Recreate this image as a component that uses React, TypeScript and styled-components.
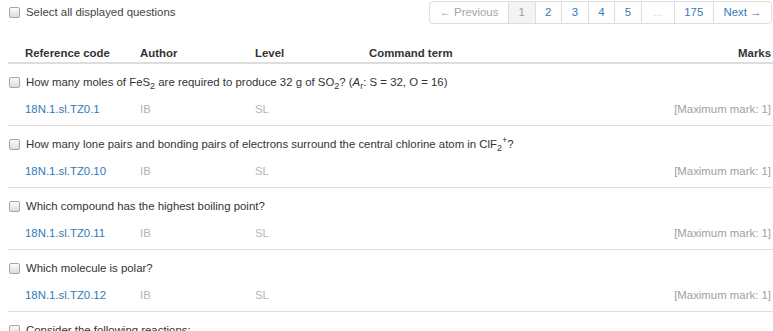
import React from "react";
import styled, { createGlobalStyle } from "styled-components";

const Global = createGlobalStyle`
  html, body { margin: 0; padding: 0; background: #fff; overflow: hidden; }
  body { font-family: "Liberation Sans", Arial, sans-serif; font-size: 11.4px; color: #333; }
`;

const Page = styled.div`
  margin-left: 8px;
  width: 765px;
`;

const TopBar = styled.div`
  display: flex;
  justify-content: space-between;
  align-items: flex-start;
  height: 25px;
`;

const SelectAll = styled.label`
  display: flex;
  align-items: center;
  gap: 6px;
  height: 24px;
  color: #444;
  line-height: 16px;
`;

const Check = styled.input.attrs({ type: "checkbox" })`
  appearance: none;
  -webkit-appearance: none;
  margin: 0 0 0 1px;
  width: 11px;
  height: 11px;
  border: 1px solid #a6a6a6;
  border-radius: 2px;
  background: linear-gradient(#fcfcfc, #dcdcdc);
  box-sizing: border-box;
  flex: none;
`;

const Pager = styled.ul`
  display: flex;
  list-style: none;
  margin: 1px 1px 0 0;
  padding: 0;
`;

const PageItem = styled.li<{ $state?: "link" | "active" | "disabled" | "gap"; $first?: boolean; $last?: boolean }>`
  height: 23px;
  box-sizing: border-box;
  display: flex;
  align-items: center;
  padding: 0 ${(p) => (p.$state === "gap" ? "11px" : "9.6px")};
  border: 1px solid #ddd;
  margin-left: ${(p) => (p.$first ? "0" : "-1px")};
  border-radius: ${(p) => (p.$first ? "4px 0 0 4px" : p.$last ? "0 4px 4px 0" : "0")};
  background: ${(p) => (p.$state === "active" ? "#f3f3f3" : "#fff")};
  color: ${(p) =>
    p.$state === "active" ? "#999" : p.$state === "disabled" ? "#a5a5a5" : p.$state === "gap" ? "#ccc" : "#337ab7"};
  font-size: ${(p) => (p.$state === "gap" ? "10px" : "11.4px")};
  line-height: 15px;
`;

const Grid = styled.div`
  display: grid;
  grid-template-columns: 115px 115px 114px 1fr auto;
  padding: 0 2px 0 17px;
  line-height: 16px;
`;

const Header = styled(Grid)`
  padding-top: 20px;
  padding-bottom: 1px;
  border-bottom: 2px solid #ddd;
  font-weight: bold;
  color: #333;
`;

const Marks = styled.div`
  text-align: right;
`;

const Block = styled.div`
  padding: 10px 0 8px;
  border-bottom: 1px solid #ddd;
`;

const Question = styled.label`
  display: flex;
  align-items: center;
  gap: 6px;
  line-height: 16px;
  margin-bottom: 11px;
  color: #333;
  sub, sup { font-size: 9px; line-height: 0; }
  sub { vertical-align: -3px; }
  sup { vertical-align: 5px; }
`;

const Code = styled.a`
  color: #337ab7;
  text-decoration: none;
`;

const Muted = styled.div<{ $tone?: "light" | "mid" }>`
  color: ${(p) => (p.$tone === "mid" ? "#a0a0a0" : "#b5b5b5")};
`;

type Q = { code: string; text: React.ReactNode };

const questions: Q[] = [
  {
    code: "18N.1.sl.TZ0.1",
    text: (
      <span>
        How many moles of FeS<sub>2</sub> are required to produce 32 g of SO<sub>2</sub>? (<i>A</i>
        <sub>r</sub>: S = 32, O = 16)
      </span>
    ),
  },
  {
    code: "18N.1.sl.TZ0.10",
    text: (
      <span>
        How many lone pairs and bonding pairs of electrons surround the central chlorine atom in ClF<sub>2</sub>
        <sup>+</sup>?
      </span>
    ),
  },
  { code: "18N.1.sl.TZ0.11", text: <span>Which compound has the highest boiling point?</span> },
  { code: "18N.1.sl.TZ0.12", text: <span>Which molecule is polar?</span> },
  { code: "18N.1.sl.TZ0.13", text: <span>Consider the following reactions:</span> },
];

const pages: { label: string; state: "link" | "active" | "disabled" | "gap" }[] = [
  { label: "← Previous", state: "disabled" },
  { label: "1", state: "active" },
  { label: "2", state: "link" },
  { label: "3", state: "link" },
  { label: "4", state: "link" },
  { label: "5", state: "link" },
  { label: "…", state: "gap" },
  { label: "175", state: "link" },
  { label: "Next →", state: "link" },
];

export default function App() {
  return (
    <>
      <Global />
      <Page>
        <TopBar>
          <SelectAll>
            <Check />
            Select all displayed questions
          </SelectAll>
          <Pager>
            {pages.map((p, i) => (
              <PageItem key={i} $state={p.state} $first={i === 0} $last={i === pages.length - 1}>
                {p.label}
              </PageItem>
            ))}
          </Pager>
        </TopBar>
        <Header>
          <div>Reference code</div>
          <div>Author</div>
          <div>Level</div>
          <div>Command term</div>
          <Marks>Marks</Marks>
        </Header>
        {questions.map((q) => (
          <Block key={q.code}>
            <Question>
              <Check />
              {q.text}
            </Question>
            <Grid>
              <Code href="#">{q.code}</Code>
              <Muted>IB</Muted>
              <Muted>SL</Muted>
              <div />
              <Muted $tone="mid">[Maximum mark: 1]</Muted>
            </Grid>
          </Block>
        ))}
      </Page>
    </>
  );
}
